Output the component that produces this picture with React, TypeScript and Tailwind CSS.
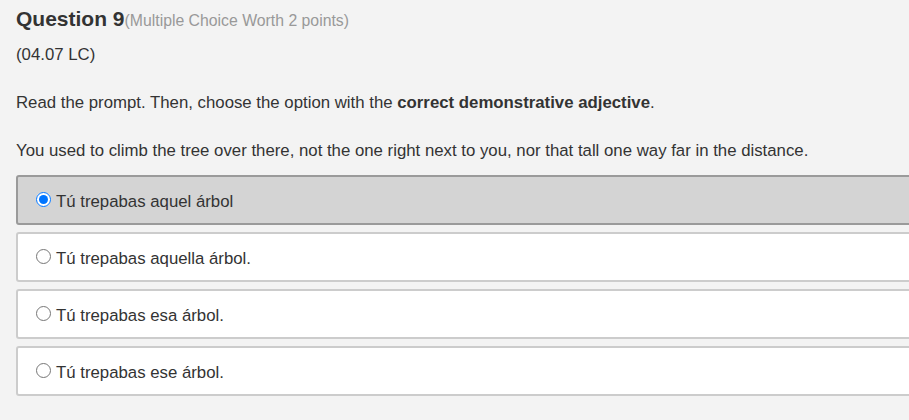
import React, { useState } from 'react';

const options = [
  'Tú trepabas aquel árbol',
  'Tú trepabas aquella árbol.',
  'Tú trepabas esa árbol.',
  'Tú trepabas ese árbol.',
];

const App: React.FC = () => {
  const [selected, setSelected] = useState(0);

  return (
    <div
      className="min-h-[420px] w-[909px] overflow-hidden bg-[#f3f3f3] pl-4 pt-[6px] text-[#333]"
      style={{ fontFamily: '"Liberation Sans", Arial, sans-serif' }}
    >
      {/* Header */}
      <h2 className="flex items-baseline">
        <span className="text-[21px] font-bold leading-[26px]">Question 9</span>
        <span className="text-[15.8px] text-[#999]">(Multiple Choice Worth 2 points)</span>
      </h2>
      <p className="mt-[12px] text-[16.8px] leading-[20px]">(04.07 LC)</p>

      {/* Prompt */}
      <p className="mt-[28px] text-[16.8px] leading-[20px]">
        Read the prompt. Then, choose the option with the <strong>correct demonstrative adjective</strong>.
      </p>
      <p className="mt-[28px] text-[16.8px] leading-[20px]">
        You used to climb the tree over there, not the one right next to you, nor that tall one way far in the distance.
      </p>

      {/* Options */}
      <div className="mt-[14px] mr-[-20px] flex flex-col gap-[7px]">
        {options.map((opt, i) => (
          <label
            key={opt}
            className={
              i === selected
                ? 'flex h-[50px] cursor-pointer items-center rounded-[3px] border-2 border-[#9a9a9a] bg-[#d4d4d4] pl-[18px]'
                : 'flex h-[50px] cursor-pointer items-center rounded-[3px] border-2 border-[#cccccc] bg-white pl-[18px]'
            }
          >
            <input
              type="radio"
              name="q9"
              checked={i === selected}
              onChange={() => setSelected(i)}
              className="m-0 mr-[5px] h-[15px] w-[15px] accent-[#0075ff]"
            />
            <span className="pt-[3px] text-[16.8px]">{opt}</span>
          </label>
        ))}
      </div>
    </div>
  );
};

export default App;
